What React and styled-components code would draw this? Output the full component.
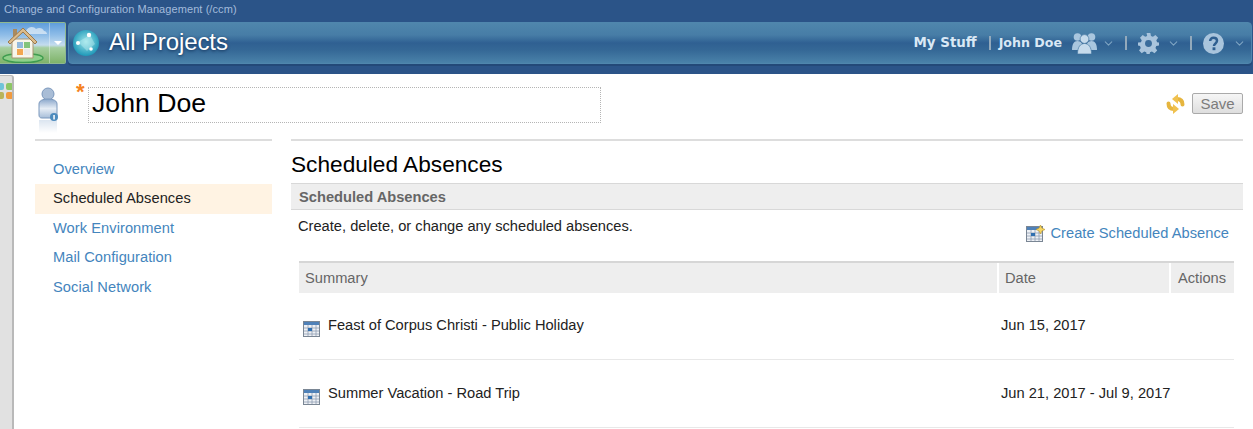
import React from "react";
import styled, { createGlobalStyle } from "styled-components";
import { ChevronDown } from "lucide-react";

const Global = createGlobalStyle`
  html, body { margin: 0; padding: 0; background: #fff; }
  body { font-family: "Liberation Sans", Arial, sans-serif; overflow: hidden; }
`;

const Page = styled.div`
  width: 1253px;
  height: 429px;
  overflow: hidden;
`;

const Banner = styled.header`
  height: 74px;
  box-sizing: border-box;
  background: #2b5488;
  display: flex;
  flex-direction: column;
`;

const AppTitle = styled.div`
  height: 22px;
  padding: 2px 0 0 4px;
  box-sizing: border-box;
  font-size: 11px;
  letter-spacing: 0.08px;
  line-height: 14px;
  color: #a3bbdb;
`;

const NavRow = styled.div`
  display: flex;
  gap: 2px;
  height: 42px;
`;

const HomeButton = styled.div`
  width: 66px;
  flex: none;
  display: flex;
  align-items: stretch;
  box-sizing: border-box;
  border: 1px solid #8fb88f;
  border-left: 0;
  border-radius: 0 2px 2px 0;
  background: linear-gradient(#5f9ddb 0%, #8fbde8 30%, #c4dcee 55%, #a6cfa0 62%, #7fb36a 100%);
  svg { flex: none; }
`;

const HomeCaret = styled.div`
  flex: 1;
  border-left: 1px solid rgba(255, 255, 255, 0.35);
  display: flex;
  align-items: center;
  justify-content: center;
  &::after {
    content: "";
    border: 4px solid transparent;
    border-top-color: #fff;
    border-bottom: 0;
  }
`;

const NavBar = styled.nav`
  flex: 1;
  margin-right: 1px;
  display: flex;
  align-items: center;
  padding: 0 5px 0 4px;
  border-radius: 4px;
  border: 1px solid #4f86ad;
  box-sizing: border-box;
  background: linear-gradient(#4f86ac 0%, #477da6 30%, #2f6092 50%, #356896 68%, #4a82a9 100%);
  box-shadow: 0 2px 0 #234978;
`;

const ProjectName = styled.div`
  margin: 0 0 3px 10px;
  font-size: 24px;
  letter-spacing: -0.1px;
  color: #fff;
  text-shadow: 0 1px 3px #16365c;
`;

const NavRight = styled.div`
  margin-left: auto;
  display: flex;
  align-items: center;
  color: #d9e8f5;
  font-family: "DejaVu Sans", sans-serif;
  font-weight: 700;
`;

const NavText = styled.span`
  font-size: ${(p) => p.$size}px;
  margin: 0 ${(p) => p.$gap}px 1px 0;
  white-space: nowrap;
`;

const Sep = styled.span`
  width: 2px;
  height: 14px;
  margin: 0 ${(p) => p.$right}px 0 ${(p) => p.$left}px;
  background: #93a9bb;
`;

const Chevron = styled(ChevronDown)`
  width: 13px;
  height: 13px;
  color: #7ea4c2;
  margin-left: ${(p) => p.$left}px;
`;

const Body = styled.div`
  display: flex;
  height: 355px;
`;

const Rail = styled.aside`
  width: 14px;
  flex: none;
  margin-top: 1px;
  background: #e1e1e1;
  border: 1px solid #b9b9b9;
  border-width: 1px 2px 0 0;
  border-radius: 0 3px 0 0;
  box-sizing: border-box;
  padding-top: 7px;
  overflow: hidden;
`;

const Swatches = styled.div`
  display: grid;
  grid-template-columns: 7px 7px;
  gap: 2px;
  margin-left: -3px;
`;

const Swatch = styled.span`
  height: 7px;
  border-radius: 2px;
  background: ${(p) => p.$color};
`;

const Content = styled.main`
  flex: 1;
  padding: 0 10px 0 21px;
  min-width: 0;
`;

const EditorHead = styled.div`
  display: flex;
  align-items: flex-start;
  height: 65px;
`;

const UserIconBox = styled.div`
  width: 41px;
  padding: 13px 0 0 3px;
  box-sizing: border-box;
  flex: none;
`;

const Star = styled.span`
  width: 12px;
  flex: none;
  padding-top: 9px;
  font-size: 22px;
  line-height: 18px;
  color: #f58220;
  font-weight: 700;
`;

const NameField = styled.div`
  margin-top: 13px;
  width: 513px;
  height: 36px;
  box-sizing: border-box;
  border: 1px dotted #b5b5b5;
  padding-left: 3px;
  font-size: 26.67px;
  line-height: 31px;
  color: #000;
`;

const SaveArea = styled.div`
  margin-left: auto;
  margin-top: 19px;
  display: flex;
  align-items: center;
  gap: 7px;
`;

const SaveButton = styled.button`
  width: 51px;
  height: 21px;
  padding: 0;
  border: 1px solid #aaa;
  border-radius: 2px;
  background: linear-gradient(#f6f6f6, #dedede);
  color: #7c7c7c;
  font: 15px "Liberation Sans", sans-serif;
`;

const Columns = styled.div`
  display: flex;
  gap: 19px;
`;

const Sidebar = styled.ul`
  width: 237px;
  flex: none;
  margin: 0;
  padding: 13.5px 0 0;
  list-style: none;
  border-top: 2px solid #ddd;
`;

const SideItem = styled.li`
  height: 29.5px;
  line-height: 29.5px;
  padding-left: 18px;
  font-size: 14.67px;
  letter-spacing: 0.05px;
  color: ${(p) => (p.$active ? "#222" : "#4485bd")};
  background: ${(p) => (p.$active ? "#fff3e3" : "transparent")};
`;

const Panel = styled.section`
  flex: 1;
  min-width: 0;
  border-top: 2px solid #ddd;
`;

const PageTitle = styled.h1`
  margin: 0;
  height: 42px;
  font-size: 22.67px;
  font-weight: 400;
  line-height: 47px;
  color: #000;
`;

const SectionBar = styled.div`
  height: 27px;
  box-sizing: border-box;
  background: #eee;
  border-top: 1px solid #d8d8d8;
  border-bottom: 1px solid #d8d8d8;
  padding-left: 8px;
  font-size: 14.67px;
  font-weight: 700;
  line-height: 26px;
  color: #666;
`;

const Intro = styled.div`
  display: flex;
  justify-content: space-between;
  height: 51px;
  padding: 0 14px 0 7px;
`;

const IntroText = styled.div`
  font-size: 14.67px;
  line-height: 32px;
  height: 32px;
  color: #222;
`;

const CreateLink = styled.a`
  display: flex;
  align-items: center;
  gap: 5px;
  height: 46px;
  font-size: 14.67px;
  letter-spacing: 0.04px;
  color: #4485bd;
`;

const Table = styled.div`
  margin: 0 9px 0 8px;
`;

const HeadRow = styled.div`
  display: grid;
  grid-template-columns: 700px 172px 1fr;
  height: 31px;
  border-top: 2px solid #d6d6d6;
  box-sizing: border-box;
`;

const HeadCell = styled.div`
  background: #eee;
  padding-left: ${(p) => p.$pad}px;
  margin-right: 2px;
  font-size: 14.67px;
  line-height: 30px;
  color: #666;
  &:last-child { margin-right: 0; }
`;

const Row = styled.div`
  display: grid;
  grid-template-columns: 700px 172px 1fr;
  height: 68px;
  box-sizing: border-box;
  border-bottom: 1px solid #e8e8e8;
`;

const SummaryCell = styled.div`
  display: flex;
  align-items: flex-start;
  padding: 24px 0 0 4px;
  gap: 8px;
  font-size: 14.67px;
  line-height: 18px;
  color: #222;
  svg { margin-top: 4px; flex: none; }
`;

const DateCell = styled.div`
  padding: 24px 0 0 2px;
  font-size: 14.67px;
  line-height: 18px;
  color: #222;
  white-space: nowrap;
`;

function HomeIcon() {
  return (
    <svg width="49" height="40" viewBox="0 0 49 40">
      <path d="M26 8c2-5 8-5 10-2 3-2 7-1 8 2 2 0 3 2 3 3H26z" fill="#e6f0f8" opacity="0.7" />
      <ellipse cx="23" cy="35" rx="20" ry="4.500" fill="#8fd08a" stroke="#3f9c4f" strokeWidth="1.500" />
      <path d="M12 16h21v19H12z" fill="#f8f5ea" stroke="#a99673" />
      <rect x="13" y="6" width="4" height="8" fill="#a98a5f" />
      <path d="M8 19L23 5l14 14-2 2L23 9 10 21z" fill="#dcbc8c" stroke="#9c7a4c" />
      <rect x="17" y="19" width="6" height="6" fill="#92b9dd" />
      <rect x="24" y="19" width="6" height="6" fill="#84c47c" />
      <rect x="17" y="26" width="6" height="6" fill="#f2a650" />
      <rect x="24" y="26" width="6" height="6" fill="#e9e9e9" />
    </svg>
  );
}

function GlobeIcon() {
  return (
    <svg width="26" height="26" viewBox="0 0 26 26">
      <defs>
        <radialGradient id="globe" cx="50%" cy="45%" r="55%">
          <stop offset="0%" stopColor="#9fe6ea" />
          <stop offset="100%" stopColor="#1e98b8" />
        </radialGradient>
      </defs>
      <circle cx="13" cy="13" r="13" fill="url(#globe)" />
      <path d="M5 12L17 5l5 9-8 7z" fill="#c8f2f4" opacity="0.4" />
      <circle cx="5" cy="13" r="2" fill="#fff" />
      <circle cx="16" cy="5" r="2.200" fill="#fff" />
      <circle cx="18" cy="19" r="1.800" fill="#fff" />
    </svg>
  );
}

function PeopleIcon() {
  return (
    <svg width="25" height="22" viewBox="0 0 25 22" fill="#a9c6de">
      <circle cx="5.500" cy="5" r="3.800" />
      <circle cx="19.500" cy="5" r="3.800" />
      <path d="M0 18c0-6 2-9 5.500-9s6 3 6 9z" />
      <path d="M13.500 18c0-6 2.500-9 6-9s5.500 3 5.500 9z" />
      <circle cx="12.500" cy="7" r="4.400" fill="#c6dbec" stroke="#487aa3" strokeWidth="0.700" />
      <path d="M5.500 22c0-7 3-10.500 7-10.500s7 3.500 7 10.500z" fill="#c6dbec" stroke="#487aa3" strokeWidth="0.700" />
    </svg>
  );
}

function GearIcon() {
  return (
    <svg width="21" height="21" viewBox="0 0 22 22" fill="#a9c4dc">
      <path d="M9 0h4l.6 3.200 2 .8 2.700-1.800 2.800 2.800-1.900 2.700.8 2 2 .3v3l-2.900.6-.8 2 1.800 2.700-2.800 2.800-2.700-1.800-2 .8-.6 2.900H9.200l-.6-2.900-2-.8-2.700 1.800-2.800-2.800 1.800-2.700-.8-2L0 13v-3l3.100-.4.800-2L2.100 5l2.800-2.800L7.600 4l2-.8z" />
      <circle cx="11" cy="11" r="3.600" fill="#3a6c9b" />
    </svg>
  );
}

function HelpIcon() {
  return (
    <svg width="21" height="21" viewBox="0 0 22 22">
      <circle cx="11" cy="11" r="11" fill="#a9c4dc" />
      <path d="M7.500 8.500C7.500 6 9 5 11 5s3.700 1.200 3.700 3.200c0 2.800-3.200 2.600-3.200 5.300" fill="none" stroke="#2f5f90" strokeWidth="2.600" />
      <rect x="10" y="15" width="3" height="3" fill="#2f5f90" />
    </svg>
  );
}

function UserInfoIcon() {
  return (
    <svg width="20" height="47" viewBox="0 0 20 47">
      <defs>
        <linearGradient id="shirt" x1="0" y1="0" x2="0" y2="1">
          <stop offset="0%" stopColor="#8aa7cb" />
          <stop offset="50%" stopColor="#e6edf5" />
          <stop offset="100%" stopColor="#a6bdd8" />
        </linearGradient>
        <linearGradient id="fade" x1="0" y1="0" x2="0" y2="1">
          <stop offset="0%" stopColor="#dbe5f0" />
          <stop offset="100%" stopColor="#fff" />
        </linearGradient>
      </defs>
      <circle cx="10" cy="7" r="6" fill="#a9bdd6" stroke="#7b98bd" />
      <path d="M1 17c0-3 3-5 9-5s9 2 9 5v11c0 2-1 3-3 3H4c-2 0-3-1-3-3z" fill="url(#shirt)" stroke="#7b98bd" />
      <rect x="1" y="33" width="18" height="13" fill="url(#fade)" />
      <circle cx="16" cy="30" r="4" fill="#4d8bbd" />
      <rect x="15.300" y="28" width="1.500" height="4.500" fill="#fff" />
    </svg>
  );
}

function SyncIcon() {
  return (
    <svg width="19" height="20" viewBox="0 0 19 20" fill="none" strokeLinecap="round">
      <path d="M16.500 10.500C16.500 7 15 5 11 5" stroke="#e6b53e" strokeWidth="4" />
      <path d="M12 0L6 5l6 5z" fill="#f0c14f" />
      <path d="M2.500 9.500C2.500 13 4 15 8 15" stroke="#e6b53e" strokeWidth="4" />
      <path d="M7 10l6 5-6 5z" fill="#f0c14f" />
    </svg>
  );
}

function CalendarIcon({ plus }) {
  return (
    <svg width={plus ? 19 : 17} height="17" viewBox={plus ? "0 0 19 17" : "0 0 17 17"}>
      <g transform="translate(0 1)">
        <rect x="0.500" y="0.500" width="16" height="15" fill="#eef1f5" stroke="#7a8694" />
        <rect x="1" y="1" width="15" height="3" fill="#4f81b8" />
        <path d="M1 7h15M1 10h15M1 13h15M5 4v11M9 4v11M13 4v11" stroke="#8fa0b3" strokeWidth="0.800" />
        <rect x="5" y="7" width="4" height="3" fill="#2f6fb0" />
      </g>
      {plus && <path d="M14.500 0l1.400 3.100 3.100 1.400-3.100 1.400-1.400 3.100-1.400-3.100-3.100-1.400 3.100-1.400z" fill="#f6d663" stroke="#bb952e" strokeWidth="0.600" />}
    </svg>
  );
}

const navItems = ["Overview", "Scheduled Absences", "Work Environment", "Mail Configuration", "Social Network"];

const absences = [
  { name: "Feast of Corpus Christi - Public Holiday", date: "Jun 15, 2017" },
  { name: "Summer Vacation - Road Trip", date: "Jun 21, 2017 - Jul 9, 2017" },
];

export default function App() {
  return (
    <Page>
      <Global />
      <Banner>
        <AppTitle>Change and Configuration Management (/ccm)</AppTitle>
        <NavRow>
          <HomeButton>
            <HomeIcon />
            <HomeCaret />
          </HomeButton>
          <NavBar>
            <GlobeIcon />
            <ProjectName>All Projects</ProjectName>
            <NavRight>
              <NavText $size={13.4} $gap={12}>My Stuff</NavText>
              <Sep $left={0} $right={8} />
              <NavText $size={12.6} $gap={10}>John Doe</NavText>
              <PeopleIcon />
              <Chevron $left={5} />
              <Sep $left={10} $right={11} />
              <GearIcon />
              <Chevron $left={8} />
              <Sep $left={10} $right={11} />
              <HelpIcon />
              <Chevron $left={9} />
            </NavRight>
          </NavBar>
        </NavRow>
      </Banner>
      <Body>
        <Rail>
          <Swatches>
            <Swatch $color="#6fc3d8" />
            <Swatch $color="#8cc665" />
            <Swatch $color="#b9b35a" />
            <Swatch $color="#f09a3e" />
          </Swatches>
        </Rail>
        <Content>
          <EditorHead>
            <UserIconBox><UserInfoIcon /></UserIconBox>
            <Star>*</Star>
            <NameField>John Doe</NameField>
            <SaveArea>
              <SyncIcon />
              <SaveButton>Save</SaveButton>
            </SaveArea>
          </EditorHead>
          <Columns>
            <Sidebar>
              {navItems.map((item) => (
                <SideItem key={item} $active={item === "Scheduled Absences"}>{item}</SideItem>
              ))}
            </Sidebar>
            <Panel>
              <PageTitle>Scheduled Absences</PageTitle>
              <SectionBar>Scheduled Absences</SectionBar>
              <Intro>
                <IntroText>Create, delete, or change any scheduled absences.</IntroText>
                <CreateLink>
                  <CalendarIcon plus />
                  Create Scheduled Absence
                </CreateLink>
              </Intro>
              <Table>
                <HeadRow>
                  <HeadCell $pad={6}>Summary</HeadCell>
                  <HeadCell $pad={6}>Date</HeadCell>
                  <HeadCell $pad={7}>Actions</HeadCell>
                </HeadRow>
                {absences.map((a) => (
                  <Row key={a.name}>
                    <SummaryCell>
                      <CalendarIcon />
                      {a.name}
                    </SummaryCell>
                    <DateCell>{a.date}</DateCell>
                    <div />
                  </Row>
                ))}
              </Table>
            </Panel>
          </Columns>
        </Content>
      </Body>
    </Page>
  );
}
